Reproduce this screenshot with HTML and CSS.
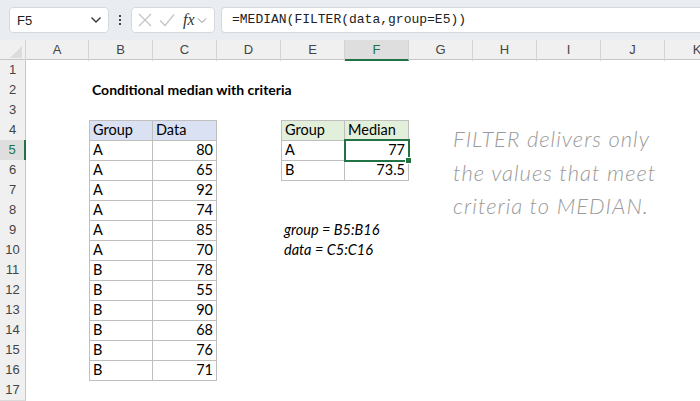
FILE: index.html
```html
<!DOCTYPE html>
<html>
<head>
<meta charset="utf-8">
<link rel="stylesheet" href="styles.css">
</head>
<body>
<div class="topbar">
  <div class="namebox"><span>F5</span>
    <svg class="chev" width="12" height="8" viewBox="0 0 12 8"><path d="M1.5 1.5 L6 6 L10.5 1.5" fill="none" stroke="#333" stroke-width="1.3"/></svg>
  </div>
  <div class="dots"><i></i><i></i><i></i></div>
  <div class="fxbox">
    <svg width="16" height="16" viewBox="0 0 16 16"><path d="M2 2 L14 14 M14 2 L2 14" stroke="#c4c4c4" stroke-width="1.2" fill="none"/></svg>
    <svg width="18" height="16" viewBox="0 0 18 16"><path d="M2 8.5 L7 13.5 L16 2.5" stroke="#c4c4c4" stroke-width="1.2" fill="none"/></svg>
    <span class="fx">fx</span>
    <svg width="10" height="7" viewBox="0 0 10 7"><path d="M1 1.5 L5 5.5 L9 1.5" fill="none" stroke="#888" stroke-width="1"/></svg>
  </div>
  <div class="formula">=MEDIAN(FILTER(data,group=E5))</div>
</div>

<div class="sheet">
  <div class="row colhead">
    <div class="corner"><span class="tri"></span></div>
    <div class="ch">A</div><div class="ch">B</div><div class="ch">C</div><div class="ch">D</div><div class="ch">E</div><div class="ch sel">F</div><div class="ch">G</div><div class="ch">H</div><div class="ch">I</div><div class="ch">J</div><div class="ch last">K</div>
  </div>

  <div class="row"><div class="rh">1</div></div>
  <div class="row"><div class="rh">2</div><div class="c"></div><div class="c title">Conditional median with criteria</div></div>
  <div class="row"><div class="rh">3</div></div>
  <div class="row"><div class="rh">4</div><div class="c"></div><div class="c t blue top">Group</div><div class="c t blue top">Data</div><div class="c"></div><div class="c t green top">Group</div><div class="c t green top">Median</div></div>
  <div class="row"><div class="rh rsel">5</div><div class="c"></div><div class="c t">A</div><div class="c t n">80</div><div class="c"></div><div class="c t">A</div><div class="c t n active">77<span class="handle"></span></div></div>
  <div class="row"><div class="rh">6</div><div class="c"></div><div class="c t">A</div><div class="c t n">65</div><div class="c"></div><div class="c t">B</div><div class="c t n">73.5</div></div>
  <div class="row"><div class="rh">7</div><div class="c"></div><div class="c t">A</div><div class="c t n">92</div></div>
  <div class="row"><div class="rh">8</div><div class="c"></div><div class="c t">A</div><div class="c t n">74</div></div>
  <div class="row"><div class="rh">9</div><div class="c"></div><div class="c t">A</div><div class="c t n">85</div><div class="c"></div><div class="c it">group = B5:B16</div></div>
  <div class="row"><div class="rh">10</div><div class="c"></div><div class="c t">A</div><div class="c t n">70</div><div class="c"></div><div class="c it">data = C5:C16</div></div>
  <div class="row"><div class="rh">11</div><div class="c"></div><div class="c t">B</div><div class="c t n">78</div></div>
  <div class="row"><div class="rh">12</div><div class="c"></div><div class="c t">B</div><div class="c t n">55</div></div>
  <div class="row"><div class="rh">13</div><div class="c"></div><div class="c t">B</div><div class="c t n">90</div></div>
  <div class="row"><div class="rh">14</div><div class="c"></div><div class="c t">B</div><div class="c t n">68</div></div>
  <div class="row"><div class="rh">15</div><div class="c"></div><div class="c t">B</div><div class="c t n">76</div></div>
  <div class="row"><div class="rh">16</div><div class="c"></div><div class="c t">B</div><div class="c t n">71</div></div>
  <div class="row"><div class="rh">17</div></div>

  <div class="note">FILTER delivers only<br>the values that meet<br>criteria to MEDIAN.</div>
</div>
</body>
</html>
```

FILE: styles.css
```css
* { box-sizing: border-box; }
html, body { margin: 0; padding: 0; background: #fff; overflow: hidden; }
body { width: 700px; height: 401px; font-family: "Lato", "Liberation Sans", sans-serif; }

.topbar {
  height: 40px;
  background: #e9edf1;
  display: flex;
  align-items: center;
  padding-left: 9px;
}
.namebox {
  width: 100px; height: 26px;
  background: #fff;
  border: 1px solid #d6d9dc;
  border-radius: 4px;
  display: flex; align-items: center; justify-content: space-between;
  padding: 0 6px 0 7px;
  font-family: "Liberation Sans", sans-serif;
  font-size: 13px; color: #222;
}
.dots { width: 22px; display: flex; flex-direction: column; align-items: center; gap: 2px; }
.dots i { width: 2px; height: 2px; background: #444; display: block; }
.fxbox {
  width: 84px; height: 26px;
  background: #fff;
  border: 1px solid #d6d9dc;
  border-radius: 4px;
  display: flex; align-items: center;
  padding: 0 3px 0 5px; gap: 5px;
}
.fx { font-family: "Liberation Serif", serif; font-style: italic; font-size: 16px; color: #333; margin-left: 2px; margin-right: -3px; }
.formula {
  margin-left: 6px;
  flex: 1; height: 26px;
  background: #fff;
  border: 1px solid #d6d9dc; border-right: none;
  border-radius: 4px 0 0 4px;
  font-family: "Liberation Mono", monospace;
  font-size: 13px; color: #222;
  line-height: 24px;
  padding-left: 10px;
}

.sheet { position: relative; }
.row { display: grid; grid-template-columns: 26px 63px repeat(10, 64px) 1fr; height: 20px; }
.colhead { background: #f0f0f0; border-bottom: 1px solid #c6c6c6; }
.corner { position: relative; border-right: 1px solid #d4d4d4; }
.tri { position: absolute; right: 3px; bottom: 3px; width: 0; height: 0; border-left: 12px solid transparent; border-bottom: 12px solid #dcdcdc; }
.ch { text-align: center; font-family: "Liberation Sans", sans-serif; font-size: 13px; line-height: 20px; color: #444; border-right: 1px solid #d4d4d4; }
.ch.last { border-right: none; }
.ch.sel { background: #dedede; color: #217346; border-bottom: 2px solid #217346; line-height: 19px; }

.rh { background: #f0f0f0; border-right: 1px solid #c6c6c6; border-bottom: 1px solid #dadada; text-align: center; font-family: "Liberation Sans", sans-serif; font-size: 13px; line-height: 20px; color: #444; }
.rh.rsel { background: #dedede; color: #217346; border-right: 2px solid #217346; }

.c { font-family: "Lato", "Liberation Sans", sans-serif; font-size: 14.5px; line-height: 20px; color: #000; padding: 0 3px; white-space: nowrap; position: relative; }
.title { font-weight: bold; grid-column: span 4; overflow: visible; font-size: 14px; }
.t { border-right: 1px solid #bfbfbf; border-bottom: 1px solid #bfbfbf; line-height: 19px; }
.t.top { border-top: 1px solid #bfbfbf; line-height: 18px; }
.blue { background: #d9e1f2; }
.green { background: #e2efda; }
.n { text-align: right; }
.c:not(.t) + .t { border-left: 1px solid #bfbfbf; }
.active { outline: 2px solid #217346; outline-offset: -1px; z-index: 2; }
.handle { position: absolute; right: -3px; bottom: -3px; width: 5px; height: 5px; background: #217346; border: 1px solid #fff; box-sizing: content-box; margin: -1px; }
.it { font-style: italic; grid-column: span 3; }

.note {
  position: absolute;
  left: 453px; top: 82px;
  font-family: "Lato", sans-serif;
  font-style: italic;
  font-weight: 300;
  font-size: 22px;
  letter-spacing: 1px;
  line-height: 33.5px;
  color: #9a9a9a;
}
```
